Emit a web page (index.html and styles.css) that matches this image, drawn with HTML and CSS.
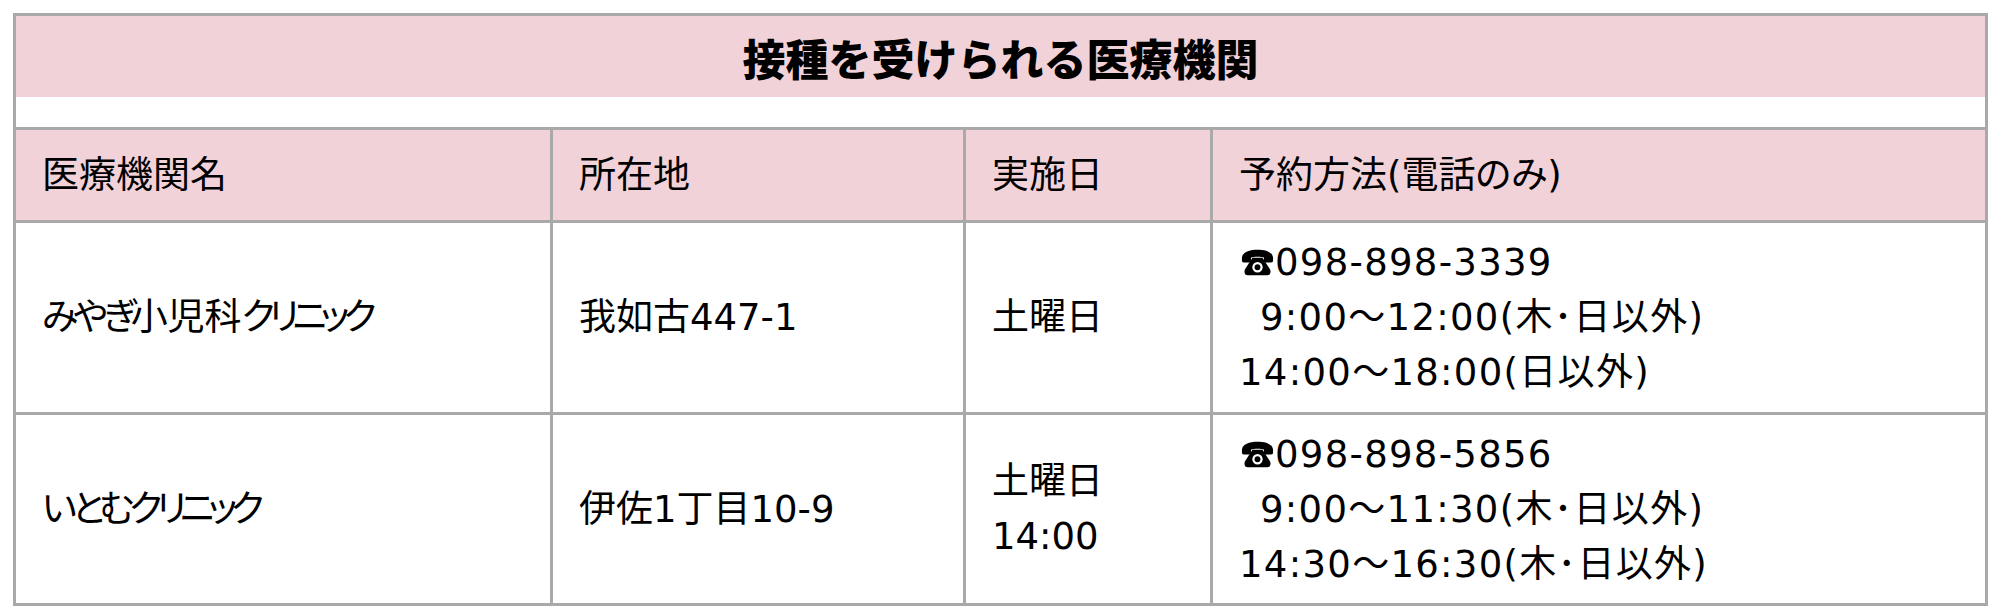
FILE: index.html
```html
<!DOCTYPE html>
<html lang="ja">
<head>
<meta charset="utf-8">
<title>接種を受けられる医療機関</title>
<link rel="stylesheet" href="styles.css">
</head>
<body>
<div class="page">
  <div class="grid">
    <div class="caption">
      <div class="title">接種を受けられる医療機関</div>
      <div class="spacer"></div>
    </div>
    <div class="cell head">医療機関名</div>
    <div class="cell head">所在地</div>
    <div class="cell head">実施日</div>
    <div class="cell head">予約方法(電話のみ)</div>

    <div class="cell"><div><span class="hira">みやぎ</span>小児科<span class="kata">クリニック</span></div></div>
    <div class="cell">我如古447-1</div>
    <div class="cell">土曜日</div>
    <div class="cell">
      <div class="line tl"><svg class="tel" viewBox="0 0 30 25" aria-hidden="true"><path d="M.6 8.5C.6 2.6 7.8.6 15 .6s14.4 2 14.4 7.9v2.4c0 1-.8 1.6-1.8 1.6h-5c-1 0-1.6-.6-1.6-1.6V7.8c-2.6-.9-9.4-.9-12 0v3.1c0 1-.6 1.6-1.6 1.6h-5c-1 0-1.8-.6-1.8-1.6z"/><path d="M10.3 8.2h9.4l6.7 10.4c1.4 2.3.6 5.8-2.1 5.8H5.7c-2.7 0-3.5-3.5-2.1-5.8z"/><circle cx="15" cy="16.9" r="4.8" fill="#fff"/><circle cx="15" cy="16.9" r="2.7"/></svg>098-898-3339</div>
      <div class="line tl indent">9:00～12:00(木･日以外)</div>
      <div class="line tl">14:00～18:00(日以外)</div>
    </div>

    <div class="cell"><div><span class="hira">いとむ</span><span class="kata">クリニック</span></div></div>
    <div class="cell">伊佐1丁目10-9</div>
    <div class="cell"><div><div class="line">土曜日</div><div class="line">14:00</div></div></div>
    <div class="cell">
      <div class="line tl"><svg class="tel" viewBox="0 0 30 25" aria-hidden="true"><path d="M.6 8.5C.6 2.6 7.8.6 15 .6s14.4 2 14.4 7.9v2.4c0 1-.8 1.6-1.8 1.6h-5c-1 0-1.6-.6-1.6-1.6V7.8c-2.6-.9-9.4-.9-12 0v3.1c0 1-.6 1.6-1.6 1.6h-5c-1 0-1.8-.6-1.8-1.6z"/><path d="M10.3 8.2h9.4l6.7 10.4c1.4 2.3.6 5.8-2.1 5.8H5.7c-2.7 0-3.5-3.5-2.1-5.8z"/><circle cx="15" cy="16.9" r="4.8" fill="#fff"/><circle cx="15" cy="16.9" r="2.7"/></svg>098-898-5856</div>
      <div class="line tl indent">9:00～11:30(木･日以外)</div>
      <div class="line tl">14:30～16:30(木･日以外)</div>
    </div>
  </div>
</div>
</body>
</html>
```
FILE: styles.css
```css
html, body {
  margin: 0;
  padding: 0;
  background: #ffffff;
}

.page {
  padding: 13px;
  font-family: "DejaVu Sans", "Noto Sans CJK JP", sans-serif;
  font-feature-settings: "palt" 1;
  color: #000000;
}

.grid {
  width: 1975px;
  box-sizing: border-box;
  display: grid;
  grid-template-columns: 534px 410px 244px 772px;
  grid-template-rows: 111px 90px 189px 188px;
  gap: 3px;
  padding: 3px;
  background: #a9a9a9;
}

.caption {
  grid-column: 1 / -1;
  display: flex;
  flex-direction: column;
}

.title {
  height: 81px;
  background: #f2d2d9;
  display: flex;
  align-items: center;
  justify-content: center;
  font-family: "Noto Sans CJK JP", sans-serif;
  font-size: 43px;
  font-weight: 900;
  font-feature-settings: normal;
}

.spacer {
  flex: 1;
  background: #ffffff;
}

.cell {
  background: #ffffff;
  display: flex;
  flex-direction: column;
  justify-content: center;
  padding-left: 26px;
  font-size: 37px;
  line-height: 55px;
  white-space: nowrap;
}

.cell.head {
  background: #f2d2d9;
}

.hira {
  letter-spacing: -0.14em;
}

.kata {
  letter-spacing: -0.17em;
}

.line {
  display: flex;
  align-items: center;
  height: 55px;
  font-feature-settings: normal;
}

.tl {
  letter-spacing: 1.3px;
}

.indent {
  padding-left: 21px;
}

.tel {
  width: 33px;
  height: 27px;
  margin-left: 2px;
  margin-right: 1px;
  fill: #000000;
}
```
